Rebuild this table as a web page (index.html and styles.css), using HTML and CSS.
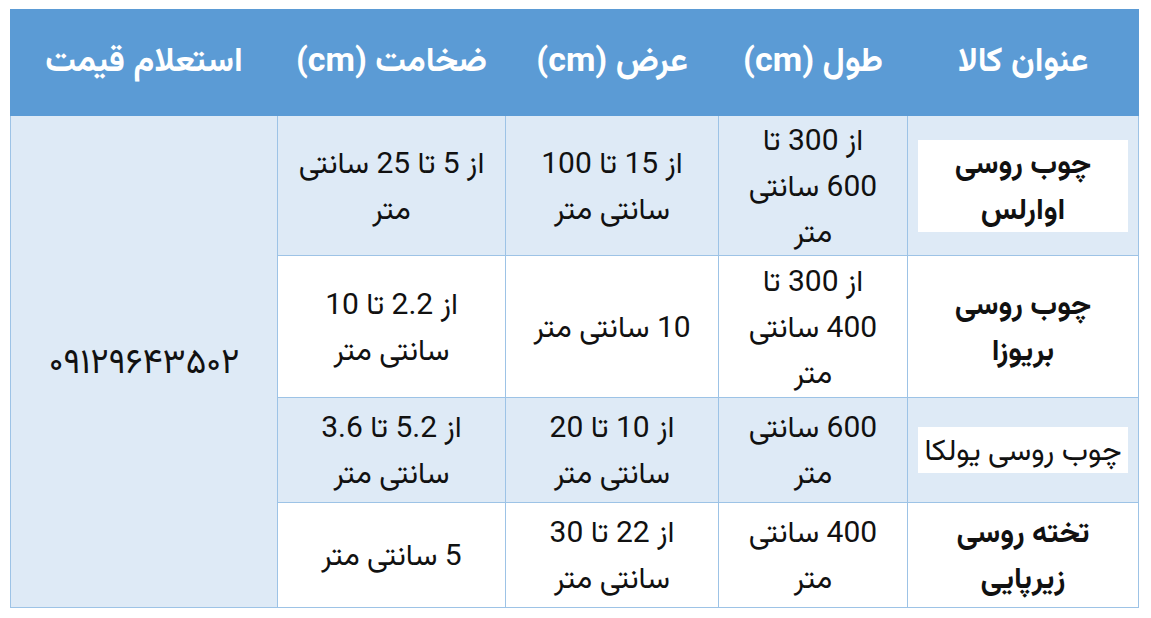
FILE: index.html
```html
<!DOCTYPE html>
<html lang="fa" dir="rtl">
<head>
<meta charset="utf-8">
<link rel="stylesheet" href="styles.css">
</head>
<body>
<table class="price-table">
  <colgroup>
    <col class="c-title"><col class="c-len"><col class="c-wid"><col class="c-thk"><col class="c-price">
  </colgroup>
  <thead>
    <tr>
      <th>عنوان کالا</th>
      <th>طول (cm)</th>
      <th>عرض (cm)</th>
      <th>ضخامت (cm)</th>
      <th>استعلام قیمت</th>
    </tr>
  </thead>
  <tbody>
    <tr class="alt r1">
      <td class="title"><span class="hl bold">چوب روسی اوارلس</span></td>
      <td class="len">از 300 تا 600 سانتی متر</td>
      <td>از 15 تا 100 سانتی متر</td>
      <td>از 5 تا 25 سانتی متر</td>
      <td class="price" rowspan="4">۰۹۱۲۹۶۴۳۵۰۲</td>
    </tr>
    <tr class="r2">
      <td class="title bold plain">چوب روسی بریوزا</td>
      <td class="len">از 300 تا 400 سانتی متر</td>
      <td>10 سانتی متر</td>
      <td>از 2.2 تا 10 سانتی متر</td>
    </tr>
    <tr class="alt short">
      <td class="title"><span class="hl">چوب روسی یولکا</span></td>
      <td class="len">600 سانتی متر</td>
      <td>از 10 تا 20 سانتی متر</td>
      <td>از 5.2 تا 3.6 سانتی متر</td>
    </tr>
    <tr class="short">
      <td class="title bold plain">تخته روسی زیرپایی</td>
      <td class="len">400 سانتی متر</td>
      <td>از 22 تا 30 سانتی متر</td>
      <td>5 سانتی متر</td>
    </tr>
  </tbody>
</table>
</body>
</html>
```

FILE: styles.css
```css
html, body {
  margin: 0;
  padding: 0;
  background: #ffffff;
}
body {
  padding: 9px 12px 0 11px;
  font-family: Roboto, "Vazirmatn", "Noto Sans Arabic", "DejaVu Sans", sans-serif;
  color: #111111;
}
.price-table {
  width: 1128px;
  border-collapse: collapse;
  table-layout: fixed;
  direction: rtl;
}
.c-title { width: 231px; }
.c-len { width: 189px; }
.c-wid { width: 213px; }
.c-thk { width: 228px; }
.c-price { width: 267px; }

.price-table th {
  background: #5b9bd5;
  color: #ffffff;
  font-size: 34px;
  font-weight: bold;
  height: 105px;
  padding: 0 6px;
  text-align: center;
  vertical-align: middle;
  border: 1px solid #5b9bd5;
}
.price-table td {
  border: 1px solid #9dc3e6;
  text-align: center;
  vertical-align: middle;
  font-size: 30px;
  line-height: 46px;
  padding: 0 12px;
}
.price-table tr.r1 td {
  height: 139px;
}
.price-table tr.r2 td {
  height: 141px;
}
.price-table tr.short td {
  height: 104px;
}
.price-table td.len {
  padding: 0 20px;
}
.price-table tr.alt td {
  background: #deeaf6;
}
.price-table td.price {
  background: #deeaf6;
  font-size: 35px;
}
.price-table td.title {
  padding: 0 10px;
  font-size: 30px;
}
.price-table td.title.plain {
  padding: 0 24px;
}
.bold {
  font-weight: bold;
}
.hl {
  display: block;
  background: #ffffff;
  line-height: 46px;
}
```
